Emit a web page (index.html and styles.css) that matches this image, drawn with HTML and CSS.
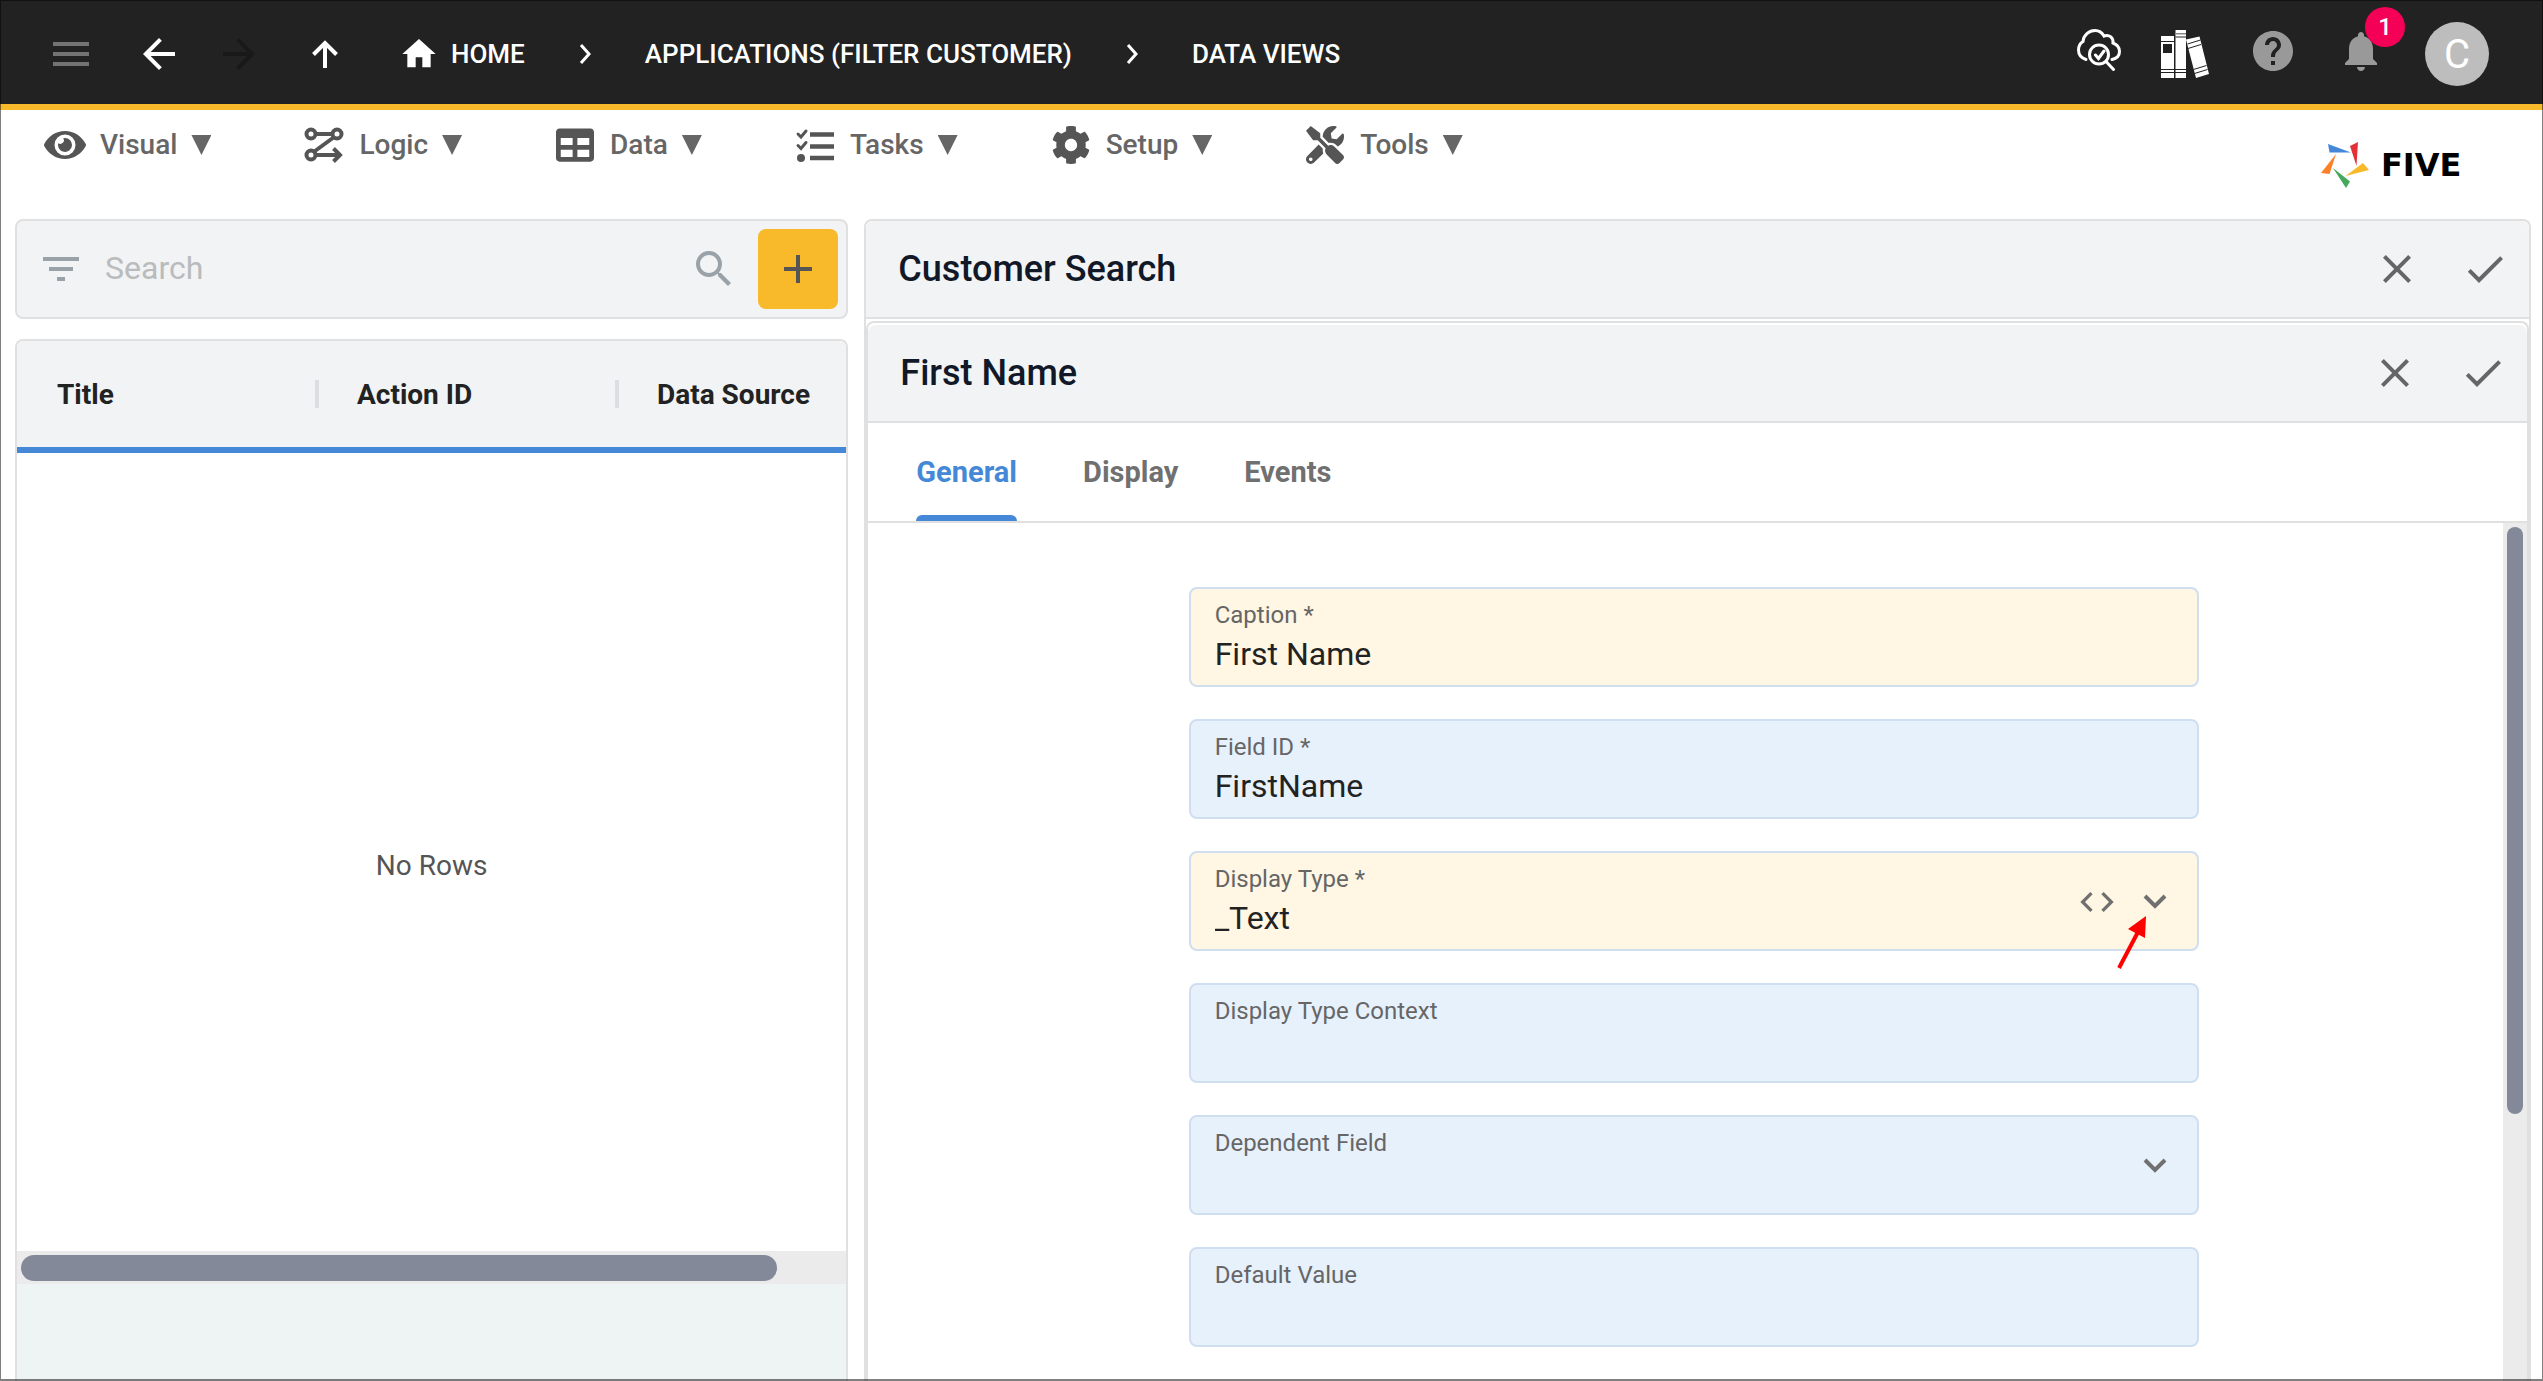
FILE: index.html
```html
<!DOCTYPE html>
<html lang="en">
<head>
<meta charset="utf-8">
<title>Five - Data Views</title>
<link rel="stylesheet" href="styles.css">
</head>
<body>
<div class="app">
  <header class="topbar">
    <div class="history">
      <button class="icon-btn dim" aria-label="Menu"><svg class="i48" viewBox="0 0 24 24"><path d="M3 18h18v-2H3v2zm0-5h18v-2H3v2zm0-7v2h18V6H3z"/></svg></button>
      <button class="icon-btn" aria-label="Back"><svg class="i48" viewBox="0 0 24 24"><path d="M20 11H7.83l5.59-5.59L12 4l-8 8 8 8 1.41-1.41L7.83 13H20v-2z"/></svg></button>
      <button class="icon-btn off" aria-label="Forward" disabled><svg class="i48" viewBox="0 0 24 24"><path d="M12 4l-1.41 1.41L16.17 11H4v2h12.17l-5.58 5.59L12 20l8-8z"/></svg></button>
    </div>
    <button class="icon-btn up" aria-label="Up"><svg class="i28" viewBox="0 0 28 28" fill="none" stroke="currentColor" stroke-width="4"><path d="M14 28V3M2.500 14.500L14 3l11.500 11.500"/></svg></button>
    <nav class="crumbs" aria-label="Breadcrumb">
      <a href="#"><svg class="i40" viewBox="0 0 24 24"><path d="M10 20v-6h4v6h5v-8h3L12 3 2 12h3v8z"/></svg>HOME</a>
      <svg class="sep" viewBox="0 0 12 20"><path d="M2 1l8 9-8 9"/></svg>
      <a href="#">APPLICATIONS (FILTER CUSTOMER)</a>
      <svg class="sep" viewBox="0 0 12 20"><path d="M2 1l8 9-8 9"/></svg>
      <a href="#">DATA VIEWS</a>
    </nav>
    <div class="actions">
      <button class="icon-btn" aria-label="Inspect"><svg class="cloud" viewBox="0 0 44 42" fill="none" stroke="currentColor" stroke-width="3" stroke-linecap="round"><path d="M9 30.500C4.500 29 1.500 25.500 1.500 21c0-4 2-7 4.500-8.500C6.500 6 12 1.500 18 1.500c4 0 7 2 9 5.500 5-2 9.500 1.500 9 7 4 1.500 6.500 4.500 6.500 8.500 0 4-3 7-7.500 8"/><circle cx="22" cy="25.500" r="9.500"/><path d="M29.500 33l7 7.500M18.500 26l3 3.500 5.500-7.500"/></svg></button>
      <button class="icon-btn" aria-label="Library"><svg class="i48" viewBox="0 0 48 48"><path d="M0 6h13v42H0zM14.500 0H25v48H14.500zM25 9.500L38.500 6.500 48 44l-13 4z"/><path fill="none" stroke="#222" d="M0 11.500h13M14.500 7H25M0 39.500h25M0 42.500h25M26.500 14l13-4M27 18.500l13-4M32.500 39.500l13-4M33.500 43.500l13-4"/><path fill="#222" d="M2 14h9v9H2z"/><path fill="#888" d="M14.500 3H25v1.500H14.500z"/></svg></button>
      <button class="icon-btn grey" aria-label="Help"><svg class="i48" viewBox="0 0 24 24"><path d="M12 2C6.480 2 2 6.480 2 12s4.480 10 10 10 10-4.480 10-10S17.520 2 12 2zm1 17h-2v-2h2v2zm2.070-7.750l-.9.920C13.450 12.900 13 13.500 13 15h-2v-.5c0-1.100.45-2.100 1.170-2.830l1.240-1.260c.37-.36.590-.86.590-1.410 0-1.100-.9-2-2-2s-2 .9-2 2H8c0-2.210 1.790-4 4-4s4 1.790 4 4c0 .88-.36 1.680-.93 2.250z"/></svg></button>
      <button class="icon-btn grey bell" aria-label="Notifications"><svg class="i48" viewBox="0 0 24 24"><path d="M12 22c1.100 0 2-.9 2-2h-4c0 1.100.89 2 2 2zm6-6v-5c0-3.070-1.640-5.640-4.500-6.320V4c0-.83-.67-1.500-1.500-1.500s-1.500.67-1.500 1.500v.68C7.630 5.360 6 7.920 6 11v5l-2 2v1h16v-1l-2-2z"/></svg><span class="badge">1</span></button>
      <button class="avatar">C</button>
    </div>
  </header>

  <div class="menubar">
    <nav class="menu" aria-label="Main">
      <button class="menu-item"><svg class="mi" viewBox="0 64 576 384"><path d="M572.520 241.400C518.290 135.590 410.930 64 288 64S57.680 135.640 3.480 241.410a32.350 32.350 0 0 0 0 29.190C57.710 376.410 165.070 448 288 448s230.320-71.640 284.520-177.410a32.350 32.350 0 0 0 0-29.190zM288 400a144 144 0 1 1 144-144 143.930 143.930 0 0 1-144 144zm0-240a95.310 95.310 0 0 0-25.310 3.790 47.850 47.850 0 0 1-66.900 66.900A95.780 95.780 0 1 0 288 160z"/></svg>Visual<span class="tri"></span></button>
      <button class="menu-item"><svg class="mi" viewBox="0 0 42 38" fill="none" stroke="currentColor" stroke-width="4"><circle cx="8" cy="8" r="4.500"/><circle cx="34" cy="8" r="4.500"/><circle cx="8" cy="29" r="4.500"/><path d="M12.500 8h17M12 25L30.500 11.500M12.500 29H37M30.500 22.500l6.500 6.500-6.500 6.500"/></svg>Logic<span class="tri"></span></button>
      <button class="menu-item"><svg class="mi" viewBox="0 0 512 512"><path d="M464 32H48C21.490 32 0 53.490 0 80v352c0 26.510 21.490 48 48 48h416c26.510 0 48-21.490 48-48V80c0-26.510-21.490-48-48-48zM224 416H64v-96h160v96zm0-160H64v-96h160v96zm224 160H288v-96h160v96zm0-160H288v-96h160v96z"/></svg>Data<span class="tri"></span></button>
      <button class="menu-item"><svg class="mi" viewBox="0 0 42 38"><g fill="none" stroke="currentColor" stroke-width="3" stroke-linecap="round"><path d="M4 8l3 3 5-6M4 19.500l3 3 5-6"/><path stroke-width="4.500" stroke-linecap="butt" d="M16 8.500h24M16 20.500h24M16 32h24"/></g><circle cx="7" cy="32" r="4"/></svg>Tasks<span class="tri"></span></button>
      <button class="menu-item"><svg class="mi" viewBox="8 8 496 496"><path d="M487.400 315.700l-42.600-24.600c4.300-23.200 4.300-47 0-70.200l42.600-24.600c4.900-2.800 7.100-8.600 5.500-14-11.100-35.600-30-67.800-54.700-94.600-3.800-4.100-10-5.100-14.800-2.300L380.800 110c-17.900-15.400-38.500-27.300-60.800-35.100V25.800c0-5.600-3.900-10.500-9.400-11.700-36.700-8.200-74.300-7.800-109.200 0-5.500 1.200-9.400 6.100-9.400 11.700V75c-22.200 7.900-42.800 19.800-60.800 35.100L88.700 85.500c-4.900-2.800-11-1.900-14.800 2.300-24.700 26.700-43.600 58.900-54.700 94.600-1.700 5.400.6 11.200 5.500 14L67.300 221c-4.300 23.200-4.300 47 0 70.200l-42.600 24.600c-4.900 2.800-7.100 8.600-5.500 14 11.100 35.600 30 67.800 54.700 94.600 3.800 4.100 10 5.100 14.800 2.300l42.600-24.600c17.900 15.400 38.500 27.300 60.800 35.100v49.200c0 5.600 3.900 10.500 9.400 11.700 36.700 8.200 74.300 7.800 109.200 0 5.500-1.200 9.400-6.100 9.400-11.700v-49.200c22.200-7.900 42.800-19.800 60.800-35.100l42.600 24.600c4.900 2.800 11 1.900 14.800-2.300 24.700-26.700 43.600-58.900 54.700-94.600 1.500-5.500-.7-11.300-5.600-14.100zM256 336c-44.100 0-80-35.900-80-80s35.900-80 80-80 80 35.900 80 80-35.900 80-80 80z"/></svg>Setup<span class="tri"></span></button>
      <button class="menu-item"><svg class="mi" viewBox="0 0 512 512"><path d="M501.100 395.700L384 278.600c-23.100-23.100-57.600-27.600-85.400-13.900L192 158.100V96L64 0 0 64l96 128h62.100l106.600 106.600c-13.600 27.800-9.200 62.300 13.900 85.400l117.100 117.100c14.600 14.600 38.200 14.600 52.700 0l52.700-52.700c14.500-14.600 14.500-38.200 0-52.700zM331.700 225c28.300 0 54.900 11 74.900 31l19.400 19.400c15.800-6.900 30.800-16.500 43.800-29.500 37.100-37.100 49.700-89.300 37.900-136.700-2.200-9-13.500-12.100-20.100-5.500l-74.400 74.400-67.900-11.300L334 98.900l74.400-74.400c6.600-6.600 3.400-17.900-5.700-20.200-47.400-11.700-99.600.9-136.600 37.900-28.500 28.500-41.900 66.100-41.200 103.600l82.100 82.100c8.100-1.900 16.500-2.900 24.700-2.900zm-103.900 82l-56.700-56.700L18.700 402.800c-25 25-25 65.500 0 90.500s65.500 25 90.500 0l123.600-123.600c-7.600-19.900-9.900-41.600-5-62.700zM64 472c-13.200 0-24-10.800-24-24 0-13.300 10.700-24 24-24s24 10.700 24 24c0 13.200-10.700 24-24 24z"/></svg>Tools<span class="tri"></span></button>
    </nav>
    <a class="brand" href="#"><svg viewBox="0 0 48 46"><path fill="#4588d8" d="M7 2l23 8.500H8.500z"/><path fill="#e23237" d="M29 4l8-4-1.500 24z"/><path fill="#f8b92a" d="M24.500 34L42 21l6 7z"/><path fill="#44a95b" d="M12 26l17 13.500-4 6.500z"/><path fill="#fc8029" d="M15 12L8.500 32 0 31z"/></svg><span class="wordmark">FIVE</span></a>
  </div>

  <main class="workspace">
    <section class="list">
      <form class="search">
        <svg class="i48" viewBox="0 0 24 24"><path d="M10 18h4v-2h-4v2zM3 6v2h18V6H3zm3 7h12v-2H6v2z"/></svg>
        <input type="search" placeholder="Search" aria-label="Search">
        <svg class="i48" viewBox="0 0 24 24"><path d="M15.500 14h-.79l-.28-.27C15.410 12.590 16 11.110 16 9.500 16 5.910 13.090 3 9.500 3S3 5.910 3 9.500 5.910 16 9.500 16c1.610 0 3.090-.59 4.230-1.570l.27.28v.79l5 4.990L20.490 19l-4.990-5zm-6 0C7.010 14 5 11.990 5 9.500S7.010 5 9.500 5 14 7.010 14 9.500 11.990 14 9.500 14z"/></svg>
        <button class="add" type="button" aria-label="Add"><svg class="i48" viewBox="0 0 24 24"><path d="M19 13h-6v6h-2v-6H5v-2h6V5h2v6h6v2z"/></svg></button>
      </form>
      <div class="grid">
        <div class="grid-head">
          <table>
            <thead><tr><th scope="col">Title</th><th scope="col">Action ID</th><th scope="col">Data Source</th></tr></thead>
          </table>
        </div>
        <div class="grid-body">No Rows</div>
        <div class="hscroll"><div class="thumb"></div></div>
        <div class="grid-foot"></div>
      </div>
    </section>

    <section class="detail">
      <div class="panel-head">
        <h1>Customer Search</h1>
        <button class="icon-btn" aria-label="Close"><svg class="i48" viewBox="0 0 24 24"><path d="M19 6.410L17.590 5 12 10.590 6.410 5 5 6.410 10.590 12 5 17.590 6.410 19 12 13.410 17.590 19 19 17.590 13.410 12z"/></svg></button>
        <button class="icon-btn" aria-label="Save"><svg class="i48" viewBox="0 0 24 24"><path d="M9 16.170L4.830 12l-1.420 1.410L9 19 21 7l-1.410-1.410z"/></svg></button>
      </div>
      <div class="sub">
        <div class="panel-head">
          <h2>First Name</h2>
          <button class="icon-btn" aria-label="Close"><svg class="i48" viewBox="0 0 24 24"><path d="M19 6.410L17.590 5 12 10.590 6.410 5 5 6.410 10.590 12 5 17.590 6.410 19 12 13.410 17.590 19 19 17.590 13.410 12z"/></svg></button>
          <button class="icon-btn" aria-label="Save"><svg class="i48" viewBox="0 0 24 24"><path d="M9 16.170L4.830 12l-1.420 1.410L9 19 21 7l-1.410-1.410z"/></svg></button>
        </div>
        <div class="tabs" role="tablist">
          <button role="tab" class="tab active" aria-selected="true">General</button>
          <button role="tab" class="tab">Display</button>
          <button role="tab" class="tab">Events</button>
        </div>
        <div class="scroller">
          <form class="fields">
            <div class="field edited"><div class="text"><label for="caption">Caption *</label><input id="caption" value="First Name"></div></div>
            <div class="field"><div class="text"><label for="fieldid">Field ID *</label><input id="fieldid" value="FirstName"></div></div>
            <div class="field edited"><div class="text"><label for="dtype">Display Type *</label><select id="dtype"><option>_Text</option></select></div>
              <button class="icon-btn" type="button" aria-label="Edit code"><svg class="i40" viewBox="0 0 24 24"><path d="M9.400 16.600L4.800 12l4.600-4.600L8 6l-6 6 6 6 1.400-1.400zm5.200 0l4.600-4.600-4.600-4.600L16 6l6 6-6 6-1.400-1.400z"/></svg></button>
              <svg class="chev" viewBox="0 0 24 16"><path d="M2 2l10 10L22 2"/></svg>
              <svg class="pointer" viewBox="0 0 32 56"><path d="M2 53L21 17" stroke="#f00" stroke-width="4"/><path fill="#f00" d="M29 1L11 14l17 9z"/></svg>
            </div>
            <div class="field"><div class="text"><label for="dctx">Display Type Context</label><input id="dctx"></div></div>
            <div class="field"><div class="text"><label for="dep">Dependent Field</label><select id="dep"><option></option></select></div>
              <svg class="chev" viewBox="0 0 24 16"><path d="M2 2l10 10L22 2"/></svg></div>
            <div class="field"><div class="text"><label for="defv">Default Value</label><input id="defv"></div></div>
          </form>
          <div class="vscroll"><div class="thumb"></div></div>
        </div>
      </div>
    </section>
  </main>
</div>
</body>
</html>
```
FILE: styles.css
```css
* { box-sizing: border-box; }
body {
  margin: 0;
  font-family: Roboto, "Liberation Sans", sans-serif;
  font-size: 28px;
  color: #222;
  background: #fff;
}
/* thin outline around the whole window */
body::after {
  content: "";
  position: fixed;
  inset: 0;
  border: solid rgba(0, 0, 0, .5);
  border-width: 1px 1px 2px;
  pointer-events: none;
}
button, input, select { font: inherit; color: inherit; border: 0; background: none; padding: 0; margin: 0; }
a { color: inherit; text-decoration: none; }
svg { display: block; flex: none; fill: currentColor; }
svg[fill="none"] { fill: none; }
h1, h2 { margin: 0; }
.i28 { width: 28px; height: 28px; }
.i40 { width: 40px; height: 40px; }
.i48 { width: 48px; height: 48px; }
.icon-btn { display: flex; flex: none; }

.app { height: 100vh; display: flex; flex-direction: column; overflow: hidden; }

.topbar {
  flex: none;
  height: 110px;
  display: flex;
  align-items: center;
  padding: 4px 54px 0 47px;
  background: #222;
  border-bottom: 6px solid #f8b92a;
  color: #fff;
}
.history { display: flex; gap: 32px; }
.dim { margin-right: 8px; color: #737373; }
.off { color: #191919; }
.grey { color: #999; }
.up { margin-left: 48px; }
.crumbs { display: flex; align-items: center; gap: 54px; margin-left: 60px; font-size: 26px; font-weight: 500; }
.crumbs a { display: flex; align-items: center; gap: 12px; }
.sep { width: 12px; height: 20px; }
.sep path { fill: none; stroke: #fff; stroke-width: 3; }
.actions { display: flex; align-items: center; gap: 40px; margin-left: auto; }
.actions .grey .i48 { margin-bottom: 6px; }
.cloud { width: 44px; height: 42px; margin-bottom: 8px; }
.bell { position: relative; }
.badge {
  position: absolute;
  left: 28px;
  top: -20px;
  width: 40px;
  height: 40px;
  border-radius: 50%;
  background: #f50057;
  color: #fff;
  font-size: 24px;
  font-weight: 500;
  line-height: 40px;
  text-align: center;
}
.avatar { width: 64px; height: 64px; border-radius: 50%; background: #bdbdbd; font-size: 40px; }

.menubar { flex: none; height: 109px; display: flex; padding: 0 46px 0 44px; }
.menu { display: flex; gap: 92px; align-items: flex-start; padding-top: 15px; }
.menu-item { display: flex; align-items: center; gap: 14px; line-height: 40px; font-weight: 500; color: #666; }
.mi { width: 42px; height: 38px; color: #555; }
.tri { width: 20px; height: 20px; background: #666; clip-path: polygon(0 0, 100% 0, 50% 100%); }
.brand { display: flex; align-items: center; gap: 12px; margin-left: auto; color: #000; font-family: "DejaVu Sans", sans-serif; font-size: 32px; font-weight: 700; }
.brand svg { width: 48px; height: 46px; }
.wordmark { width: 116px; }

.workspace {
  flex: 1;
  min-height: 0;
  display: grid;
  grid-template-columns: minmax(0, 1fr) minmax(0, 2fr);
  gap: 16px;
  padding: 0 12px 0 15px;
}
.list { display: flex; flex-direction: column; gap: 20px; min-height: 0; }
.search {
  display: flex;
  align-items: center;
  height: 100px;
  flex: none;
  padding: 0 8px 0 20px;
  border: 2px solid #e0e0e0;
  border-radius: 8px;
  background: #f1f3f5;
  color: #9aa2a9;
}
.search input { flex: 1; min-width: 0; padding: 0 0 2px 20px; font-size: 32px; outline: 0; }
.search input::placeholder { color: #b9bbbd; opacity: 1; }
.add { display: flex; align-items: center; justify-content: center; width: 80px; height: 80px; margin-left: 20px; border-radius: 8px; background: #f8b92a; color: #555; }

.grid { flex: 1; min-height: 0; display: flex; flex-direction: column; border: 2px solid #e0e0e0; border-bottom: 0; border-radius: 8px 8px 0 0; overflow: hidden; }
.grid-head { flex: none; overflow: hidden; padding-left: 2px; background: #f1f3f5; border-bottom: 6px solid #4588d8; }
.grid-head table { width: 900px; table-layout: fixed; border-collapse: collapse; }
.grid-head th { height: 106px; padding: 0 0 0 38px; text-align: left; font-weight: 700; background: linear-gradient(#dcdfe1, #dcdfe1) no-repeat right center / 4px 28px; }
.grid-body { flex: 1; display: flex; align-items: center; justify-content: center; padding-top: 26px; color: #555; }
.hscroll { flex: none; height: 33px; padding: 4px; background: #ebebeb; }
.thumb { border-radius: 13px; background: #838999; }
.hscroll .thumb { width: 92%; height: 26px; }
.grid-foot { flex: none; height: 97px; background: #eef3f4; }

.detail { display: flex; flex-direction: column; min-height: 0; border: 2px solid #e0e0e0; border-bottom: 0; border-radius: 8px 8px 0 0; }
.panel-head {
  flex: none;
  display: flex;
  align-items: center;
  gap: 40px;
  height: 98px;
  padding: 0 20px 0 32px;
  border-bottom: 2px solid #e0e0e0;
  border-radius: 8px 8px 0 0;
  background: #f1f3f5;
  color: #666;
}
.panel-head h1, .panel-head h2 { flex: 1; font-size: 36px; font-weight: 500; color: #111827; }
.sub { flex: 1; min-height: 0; display: flex; flex-direction: column; margin-top: 2px; padding-top: 2px; border: 2px solid #e0e0e0; border-bottom: 0; border-radius: 8px 8px 0 0; }
.tabs { flex: none; display: flex; gap: 66px; height: 100px; padding-left: 48px; border-bottom: 2px solid #e0e0e0; }
.tab { position: relative; font-size: 29px; font-weight: 700; color: #707070; }
.active { color: #4588d8; }
.active::after { content: ""; position: absolute; left: 0; right: 0; bottom: 0; height: 6px; border-radius: 6px 6px 0 0; background: #4588d8; }

.scroller { flex: 1; min-height: 0; display: flex; overflow: hidden; }
.fields { flex: 1; display: flex; flex-direction: column; align-items: center; gap: 32px; padding: 64px 0 0 16px; }
.field {
  position: relative;
  flex: none;
  display: flex;
  align-items: center;
  gap: 26px;
  width: 64%;
  max-width: 1010px;
  height: 100px;
  padding: 2px 30px 0 24px;
  border: 2px solid #cfdff0;
  border-radius: 8px;
  background: #e7f1fc;
  color: #707070;
}
.edited { background: #fff6e3; }
.text { flex: 1; display: flex; flex-direction: column; }
.text label { font-size: 24px; line-height: 32px; color: #666; }
.text input, .text select { width: 100%; height: 46px; font-size: 32px; color: #222; appearance: none; outline: 0; }
.chev { width: 24px; height: 16px; }
.chev path { fill: none; stroke: currentColor; stroke-width: 4; }
.pointer { position: absolute; right: 48px; top: 62px; width: 32px; height: 56px; z-index: 1; }
.vscroll { flex: none; width: 24px; padding: 4px; background: #ebebeb; }
.vscroll .thumb { height: 69%; }
```
